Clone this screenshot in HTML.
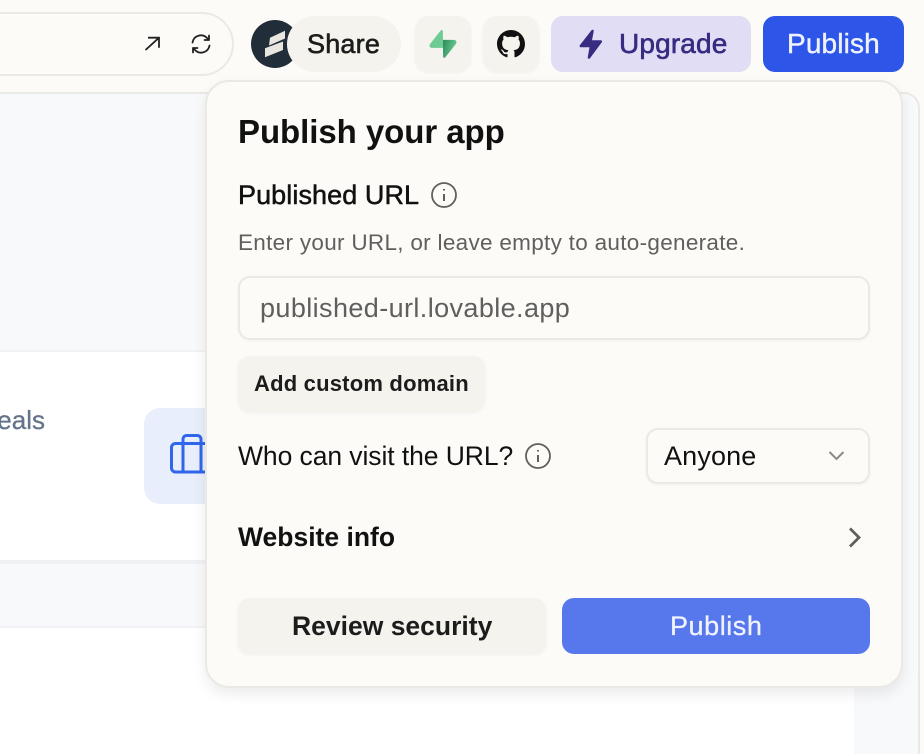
<!DOCTYPE html>
<html><head><meta charset="utf-8"><style>
*{box-sizing:border-box;margin:0;padding:0}
html,body{width:924px;height:754px;overflow:hidden;background:#fcfbf8;font-family:"Liberation Sans",sans-serif}
#r{position:relative;width:924px;height:754px;overflow:hidden}
.a{position:absolute}
.t{position:absolute;white-space:nowrap;line-height:30px;height:30px}
.b{font-weight:700}
svg{position:absolute;overflow:visible}
</style></head><body><div id="r">
<!-- preview frame -->
<div class="a" style="left:0;top:92px;width:920px;height:662px;background:#f8f9fb;border:2px solid #ebe9e3;border-left:none;border-bottom:none;border-radius:0 16px 0 0"></div>
<div class="a" style="left:0;top:350px;width:854px;height:214px;background:#fff;border-top:2px solid #f1f2f5;border-bottom:4px solid #f0f1f4"></div>
<div class="a" style="left:0;top:626px;width:854px;height:128px;background:#fff;border-top:2px solid #f1f2f5"></div>
<div class="t" style="left:-9px;top:405px;font-size:26px;color:#64748b;-webkit-text-stroke:.3px #64748b;width:54px;overflow:hidden;direction:rtl">eals</div>
<div class="a" style="left:144px;top:408px;width:96px;height:96px;background:#e8eefb;border-radius:16px"></div>
<svg style="left:170px;top:434px" width="48" height="40" fill="none" stroke="#2f66eb" stroke-width="3" stroke-linejoin="round"><rect x="1.500" y="9.500" width="41" height="28.500" rx="4"/><path d="M13 38V5.500c0-2.500 1.500-4 4-4h10c2.500 0 4 1.500 4 4V38"/></svg>
<!-- url pill -->
<div class="a" style="left:0;top:12px;width:234px;height:64px;border:2px solid #ebe9e3;border-left:none;border-radius:0 32px 32px 0;background:#fcfbf8"></div>
<svg style="left:140px;top:32px" width="24" height="24" fill="none" stroke="#222" stroke-width="1.800"><path d="M5.500 18L19 5.700M8 5.700H19V15.700"/></svg>
<svg style="left:189px;top:32px" width="24" height="24" viewBox="0 0 24 24" fill="none" stroke="#222" stroke-width="1.800" stroke-linecap="round" stroke-linejoin="round"><path d="M3.500 10.500A8.500 8.500 0 0 1 18 6l2 2M20 3.500V8h-4.500M20.500 13.500A8.500 8.500 0 0 1 6 18l-2-2M4 20.500V16h4.500"/></svg>
<!-- avatar -->
<div class="a" style="left:251px;top:20px;width:48px;height:48px;border-radius:50%;background:#222d3a"></div>
<svg style="left:264px;top:29px" width="24" height="30" fill="#e8e6df"><path d="M6 8.700L21 1.700V9.500L5 16.500ZM1 19.300L19 12.500V21L1 28.300Z"/></svg>
<div class="a" style="left:287px;top:16px;width:114px;height:56px;border-radius:28px;background:#f5f3ee"></div>
<div class="t" style="left:307px;top:29px;font-size:27px;color:#1c1c1c;-webkit-text-stroke:.6px #1c1c1c;letter-spacing:.2px">Share</div>
<!-- supabase -->
<div class="a" style="left:415px;top:16px;width:56px;height:56px;border-radius:14px;background:#f5f3ee;box-shadow:0 1px 3px rgba(0,0,0,.05)"></div>
<svg style="left:429px;top:30px" width="28" height="28" viewBox="0 0 109 113"><defs><linearGradient id="g" x1="54" y1="60" x2="107" y2="75" gradientUnits="userSpaceOnUse"><stop offset="0" stop-color="#2f8f5f"/><stop offset="1" stop-color="#6ecb94"/></linearGradient></defs><path d="M63.708 110.284C60.848 113.885 55.050 111.912 54.981 107.314L53.974 40.063H99.194C107.384 40.063 111.952 49.523 106.859 55.937Z" fill="url(#g)"/><path d="M45.317 2.071C48.177 -1.530 53.975 .443 54.043 5.041L54.485 72.292H9.831C1.640 72.292 -2.928 62.832 2.166 56.418Z" fill="#6ecb94"/></svg>
<!-- github -->
<div class="a" style="left:483px;top:16px;width:56px;height:56px;border-radius:14px;background:#f5f3ee;box-shadow:0 1px 3px rgba(0,0,0,.05)"></div>
<svg style="left:497px;top:30px" width="28" height="28" viewBox="0 0 16 16" fill="#111"><path d="M8 0C3.580 0 0 3.580 0 8c0 3.540 2.290 6.530 5.470 7.590.4.070.55-.17.55-.38 0-.19-.01-.82-.01-1.490-2.010.37-2.530-.49-2.690-.94-.09-.23-.48-.94-.82-1.130-.28-.15-.68-.52-.01-.53.63-.01 1.080.58 1.230.82.720 1.210 1.870.87 2.330.66.070-.52.280-.87.510-1.070-1.780-.2-3.640-.89-3.640-3.950 0-.87.310-1.590.820-2.150-.08-.2-.36-1.020.08-2.120 0 0 .67-.21 2.200.82.640-.18 1.320-.27 2-.27s1.360.09 2 .27c1.530-1.040 2.200-.82 2.200-.82.440 1.100.160 1.920.080 2.120.510.560.820 1.270.820 2.150 0 3.070-1.870 3.750-3.650 3.950.29.250.54.730.54 1.480 0 1.070-.01 1.930-.01 2.200 0 .21.150.46.550.38A8.010 8.010 0 0 0 16 8c0-4.420-3.580-8-8-8z"/></svg>
<!-- upgrade -->
<div class="a" style="left:551px;top:16px;width:200px;height:56px;border-radius:12px;background:#e0ddf5"></div>
<svg style="left:578px;top:28px" width="28" height="32" viewBox="0 0 28 32" fill="#372c80" stroke="#372c80" stroke-width="2.500" stroke-linejoin="round"><path d="M14.500 3 2.800 18H13L11 29.500 22.800 13.500H12.500Z"/></svg>
<div class="t" style="left:619px;top:29px;font-size:28px;color:#372c80;-webkit-text-stroke:.6px #372c80;letter-spacing:.15px">Upgrade</div>
<!-- publish -->
<div class="a" style="left:763px;top:16px;width:141px;height:56px;border-radius:12px;background:#2d55e8"></div>
<div class="t" style="left:787px;top:29px;font-size:28px;color:#eef1fe;-webkit-text-stroke:.4px #eef1fe;letter-spacing:.15px">Publish</div>
<!-- popover -->
<div class="a" style="left:205px;top:80px;width:698px;height:608px;background:#fcfbf8;border:2px solid #ebe9e3;border-radius:24px;box-shadow:0 6px 14px rgba(0,0,0,.08)"></div>
<div class="t b" style="left:238px;top:117px;font-size:33px;color:#111;letter-spacing:-.06px">Publish your app</div>
<div class="t" style="left:238px;top:180px;font-size:27px;color:#111;-webkit-text-stroke:.5px #111;letter-spacing:.08px">Published URL</div>
<svg style="left:431px;top:182px" width="26" height="26" fill="none" stroke="#5f5f5d" stroke-width="1.800"><circle cx="13" cy="13" r="12"/><path d="M13 12v7M13 7v1.500" stroke-width="2"/></svg>
<div class="t" style="left:238px;top:228px;font-size:22.500px;color:#5f5f5d;letter-spacing:.3px">Enter your URL, or leave empty to auto-generate.</div>
<div class="a" style="left:238px;top:276px;width:632px;height:64px;border:2px solid #ebe9e3;border-radius:12px;background:#fcfbf8;box-shadow:0 1px 2px rgba(0,0,0,.04)"></div>
<div class="t" style="left:260px;top:293px;font-size:27px;color:#5f5f5d;letter-spacing:.4px">published-url.lovable.app</div>
<div class="a" style="left:238px;top:356px;width:247px;height:56px;border-radius:12px;background:#f5f3ee;box-shadow:0 1px 3px rgba(0,0,0,.05)"></div>
<div class="t b" style="left:254px;top:369px;font-size:22px;color:#1c1c1c;letter-spacing:.2px">Add custom domain</div>
<div class="t" style="left:238px;top:441px;font-size:26.500px;color:#111;letter-spacing:-.08px">Who can visit the URL?</div>
<svg style="left:525px;top:443px" width="26" height="26" fill="none" stroke="#5f5f5d" stroke-width="1.800"><circle cx="13" cy="13" r="12"/><path d="M13 12v7M13 7v1.500" stroke-width="2"/></svg>
<div class="a" style="left:646px;top:428px;width:224px;height:56px;border:2px solid #ebe9e3;border-radius:12px;background:#fcfbf8;box-shadow:0 1px 2px rgba(0,0,0,.05)"></div>
<div class="t" style="left:664px;top:441px;font-size:27px;color:#111;letter-spacing:.15px">Anyone</div>
<svg style="left:828px;top:450px" width="18" height="12" fill="none" stroke="#8a8a88" stroke-width="2"><path d="M1.500 2L8.500 9 15.500 2"/></svg>
<div class="t b" style="left:238px;top:522px;font-size:26.500px;color:#111">Website info</div>
<svg style="left:848px;top:527px" width="14" height="22" fill="none" stroke="#5f5f5d" stroke-width="2.800"><path d="M2 1.500L11 10.500 2 19.500"/></svg>
<div class="a" style="left:238px;top:598px;width:308px;height:56px;border-radius:12px;background:#f5f3ee;box-shadow:0 1px 3px rgba(0,0,0,.05)"></div>
<div class="t b" style="left:292px;top:611px;font-size:26.500px;color:#1c1c1c">Review security</div>
<div class="a" style="left:562px;top:598px;width:308px;height:56px;border-radius:12px;background:#5777ed"></div>
<div class="t" style="left:670px;top:611px;font-size:27px;color:#f0f3fe;-webkit-text-stroke:.3px #f0f3fe;letter-spacing:.55px">Publish</div>
</div></body></html>
